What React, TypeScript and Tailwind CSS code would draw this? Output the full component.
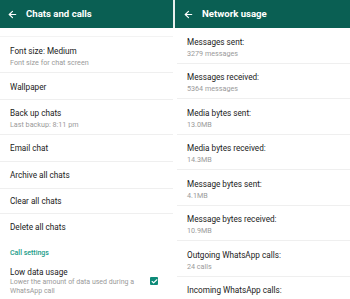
import { ArrowLeft, Check } from 'lucide-react';

interface RowProps {
    title: string;
    subtitle?: string;
    className?: string;
}

function Row({ title, subtitle, className = '' }: RowProps) {
    return (
        <div className={`border-b border-[#efefef] pl-[10px] shrink-0 ${className}`}>
            <p className="text-[8.2px] leading-[11px] text-[#1a1a1a]">{title}</p>
            {subtitle && <p className="text-[7.2px] leading-[9px] mt-[1px] text-[#9a9a9a]">{subtitle}</p>}
        </div>
    );
}

function Header({ title, arrowPad }: { title: string; arrowPad: string }) {
    return (
        <div className={`h-[28px] shrink-0 bg-[#0a5f53] flex items-center ${arrowPad}`}>
            <ArrowLeft className="h-[11px] w-[11px] text-white" strokeWidth={2.5} />
            <span className="ml-[8px] text-[9.6px] font-bold text-white">{title}</span>
        </div>
    );
}

const network = [
    ['Messages sent:', '3279 messages'],
    ['Messages received:', '5364 messages'],
    ['Media bytes sent:', '13.0MB'],
    ['Media bytes received:', '14.3MB'],
    ['Message bytes sent:', '4.1MB'],
    ['Message bytes received:', '10.9MB'],
    ['Outgoing WhatsApp calls:', '24 calls'],
    ['Incoming WhatsApp calls:', '24 calls'],
];

export default function App() {
    return (
        <div className="w-[350px] h-[299px] overflow-hidden bg-white flex" style={{ fontFamily: 'Roboto, "Noto Sans", sans-serif' }}>
            {/* Chats and calls */}
            <div className="w-[173px] shrink-0 flex flex-col">
                <Header title="Chats and calls" arrowPad="pl-[7px]" />
                <div className="h-[9px] shrink-0 border-b border-[#f3f3f3]" />
                <Row title="Font size: Medium" subtitle="Font size for chat screen" className="h-[36px] pt-[9px]" />
                <Row title="Wallpaper" className="h-[27px] pt-[9px]" />
                <Row title="Back up chats" subtitle="Last backup: 8:11 pm" className="h-[35px] pt-[8px]" />
                <Row title="Email chat" className="h-[27px] pt-[8px]" />
                <Row title="Archive all chats" className="h-[27px] pt-[8px]" />
                <Row title="Clear all chats" className="h-[25px] pt-[7px]" />
                <div className="h-[27px] shrink-0 pl-[10px] pt-[8px]">
                    <p className="text-[8.2px] leading-[11px] text-[#1a1a1a]">Delete all chats</p>
                </div>
                <p className="pl-[10px] pt-[8px] text-[7px] leading-[9px] font-medium text-[#1a9b88]">Call settings</p>
                <div className="flex items-start pl-[10px] pt-[9px]">
                    <div className="flex-1">
                        <p className="text-[8.2px] leading-[11px] text-[#1a1a1a]">Low data usage</p>
                        <p className="text-[7px] leading-[8.5px] text-[#9a9a9a]">
                            Lower the amount of data used during a<br />WhatsApp call
                        </p>
                    </div>
                    <div className="mt-[10px] mr-[15px] h-[8px] w-[8px] rounded-[1px] bg-[#0d8a78] flex items-center justify-center">
                        <Check className="h-[7px] w-[7px] text-white" strokeWidth={4} />
                    </div>
                </div>
            </div>

            <div className="w-[2px] shrink-0 flex flex-col">
                <div className="h-[28px] bg-[#e8f0ee]" />
            </div>

            {/* Network usage */}
            <div className="flex-1 flex flex-col">
                <Header title="Network usage" arrowPad="pl-[8px]" />
                <div className="pl-[2px] flex flex-col">
                    {network.map(([t, s]) => (
                        <Row key={t} title={t} subtitle={s} className="h-[35.5px] pt-[8.5px]" />
                    ))}
                </div>
            </div>
        </div>
    );
}
